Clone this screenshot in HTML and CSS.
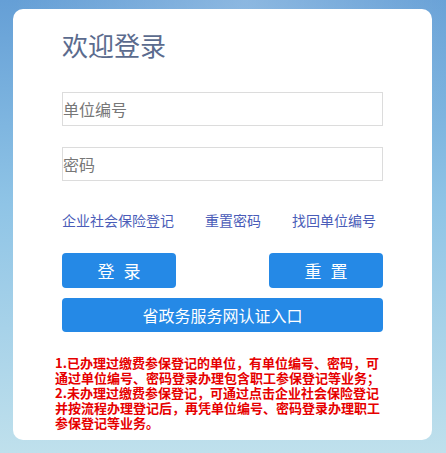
FILE: index.html
```html
<!DOCTYPE html>
<html lang="zh-CN">
<head>
    <meta charset="UTF-8">
    <meta name="viewport" content="width=device-width, initial-scale=1.0">
    <title>欢迎登录</title>
    <link rel="stylesheet" href="styles.css">
</head>
<body>

<div class="login-box">
    <h2 class="title">欢迎登录</h2>

    <input type="text" class="field" placeholder="单位编号">
    <input type="password" class="field field-pwd" placeholder="密码">

    <div class="links">
        <a href="#">企业社会保险登记</a>
        <a href="#">重置密码</a>
        <a href="#">找回单位编号</a>
    </div>

    <div class="btn-row">
        <button class="btn btn-half">登录</button>
        <button class="btn btn-half">重置</button>
    </div>
    <button class="btn btn-wide">省政务服务网认证入口</button>

    <div class="notes">
        <p>1.已办理过缴费参保登记的单位，有单位编号、密码，可通过单位编号、密码登录办理包含职工参保登记等业务；</p>
        <p>2.未办理过缴费参保登记，可通过点击企业社会保险登记并按流程办理登记后，再凭单位编号、密码登录办理职工参保登记等业务。</p>
    </div>
</div>

</body>
</html>
```

FILE: styles.css
```css
html {
    height: 100%;
}
body {
    margin: 0;
    height: 100%;
    font-family: "Noto Sans CJK SC", "Noto Sans", sans-serif;
    background: radial-gradient(circle at 55% 0%, rgba(255, 255, 255, 0.25), rgba(255, 255, 255, 0) 45%),
                linear-gradient(to bottom, #659fd6 0%, #8fc4e6 45%, #bfe0ec 100%);
    overflow: hidden;
}
.login-box {
    box-sizing: border-box;
    width: 419px;
    height: 431px;
    margin: 9px 0 0 13px;
    padding: 21px 49px 0 49px;
    background: #fff;
    border-radius: 10px;
}
.title {
    margin: 0 0 32px 0;
    font-size: 26px;
    line-height: 30px;
    font-weight: normal;
    color: #5b6b8e;
}
.field {
    display: block;
    box-sizing: border-box;
    width: 321px;
    height: 34px;
    margin: 0;
    padding: 0;
    border: 1px solid #dcdcdc;
    font-family: inherit;
    font-size: 16px;
    color: #333;
    outline: none;
}
.field::placeholder {
    color: #777;
}
.field-pwd {
    margin-top: 21px;
}
.links {
    display: flex;
    gap: 31px;
    margin-top: 29px;
    line-height: 20px;
    font-size: 14px;
}
.links a {
    color: #4a5cb8;
    text-decoration: none;
}
.btn-row {
    display: flex;
    justify-content: space-between;
    margin-top: 23px;
}
.btn {
    display: block;
    border: none;
    border-radius: 4px;
    background-color: #2589e6;
    color: #fff;
    font-family: inherit;
    padding: 0;
    cursor: pointer;
}
.btn-half {
    width: 114px;
    height: 35px;
    font-size: 17px;
    letter-spacing: 9px;
    padding-left: 9px;
}
.btn-wide {
    width: 321px;
    height: 34px;
    margin-top: 10px;
    font-size: 16px;
}
.notes {
    width: 330px;
    margin: 23px 0 0 -7px;
    color: #e60000;
    font-size: 13px;
    font-weight: bold;
    line-height: 15px;
}
.notes p {
    margin: 0;
}
```
